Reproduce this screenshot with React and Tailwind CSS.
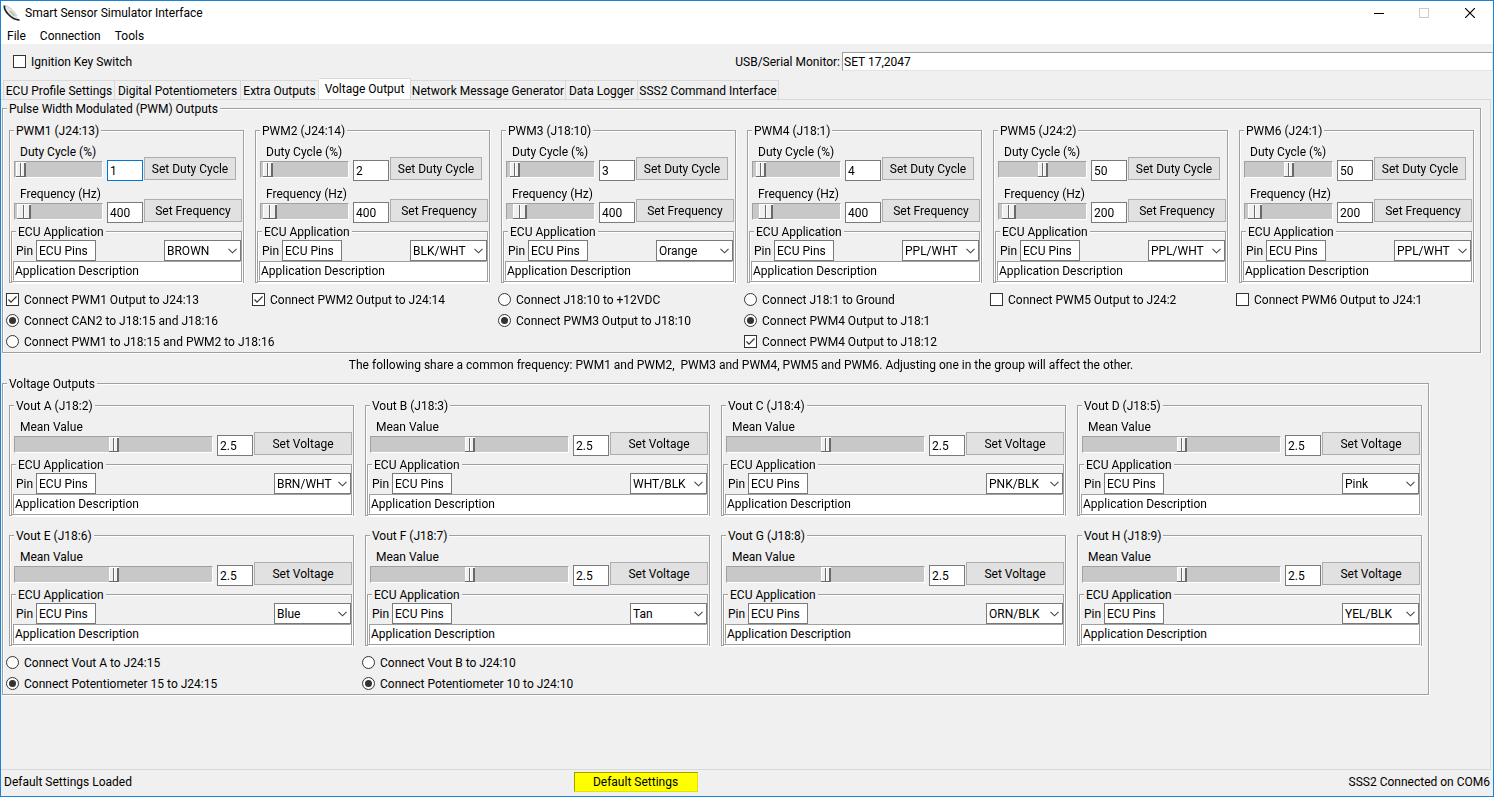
import React from "react";

const pwmOutputs = [
  {
    title: "PWM1 (J24:13)",
    duty: "1",
    dutyPos: 0,
    freq: "400",
    freqPos: 2,
    color: "BROWN",
    focused: true,
    options: [
      { type: "checkbox", label: "Connect PWM1 Output to J24:13", checked: true },
      { type: "radio", label: "Connect CAN2 to J18:15 and J18:16", checked: true },
      { type: "radio", label: "Connect PWM1 to J18:15 and PWM2 to J18:16" },
    ],
  },
  {
    title: "PWM2 (J24:14)",
    duty: "2",
    dutyPos: 1,
    freq: "400",
    freqPos: 2,
    color: "BLK/WHT",
    options: [
      { type: "checkbox", label: "Connect PWM2 Output to J24:14", checked: true },
    ],
  },
  {
    title: "PWM3 (J18:10)",
    duty: "3",
    dutyPos: 2,
    freq: "400",
    freqPos: 7,
    color: "Orange",
    options: [
      { type: "radio", label: "Connect J18:10 to +12VDC" },
      { type: "radio", label: "Connect PWM3 Output to J18:10", checked: true },
    ],
  },
  {
    title: "PWM4 (J18:1)",
    duty: "4",
    dutyPos: 3,
    freq: "400",
    freqPos: 7,
    color: "PPL/WHT",
    options: [
      { type: "radio", label: "Connect J18:1 to Ground" },
      { type: "radio", label: "Connect PWM4 Output to J18:1", checked: true },
      { type: "checkbox", label: "Connect PWM4 Output to J18:12", checked: true },
    ],
  },
  {
    title: "PWM5 (J24:2)",
    duty: "50",
    dutyPos: 50,
    freq: "200",
    freqPos: 3,
    color: "PPL/WHT",
    options: [{ type: "checkbox", label: "Connect PWM5 Output to J24:2" }],
  },
  {
    title: "PWM6 (J24:1)",
    duty: "50",
    dutyPos: 50,
    freq: "200",
    freqPos: 3,
    color: "PPL/WHT",
    options: [{ type: "checkbox", label: "Connect PWM6 Output to J24:1" }],
  },
];

const voltageOutputs = [
  { title: "Vout A (J18:2)", color: "BRN/WHT" },
  { title: "Vout B (J18:3)", color: "WHT/BLK" },
  { title: "Vout C (J18:4)", color: "PNK/BLK" },
  { title: "Vout D (J18:5)", color: "Pink" },
  {
    title: "Vout E (J18:6)",
    color: "Blue",
    options: [
      { type: "radio", label: "Connect Vout A to J24:15" },
      { type: "radio", label: "Connect Potentiometer 15 to J24:15", checked: true },
    ],
  },
  {
    title: "Vout F (J18:7)",
    color: "Tan",
    options: [
      { type: "radio", label: "Connect Vout B to J24:10" },
      { type: "radio", label: "Connect Potentiometer 10 to J24:10", checked: true },
    ],
  },
  { title: "Vout G (J18:8)", color: "ORN/BLK" },
  { title: "Vout H (J18:9)", color: "YEL/BLK" },
];

const tabs = [
  { label: "ECU Profile Settings", width: "w-28" },
  { label: "Digital Potentiometers", width: "w-[126px]" },
  { label: "Extra Outputs", width: "w-[78px]" },
  { label: "Voltage Output", width: "w-[92px]", active: true },
  { label: "Network Message Generator", width: "w-[155px]" },
  { label: "Data Logger", width: "w-[72px]" },
  { label: "SSS2 Command Interface", width: "w-[141px]" },
];

function Group({ title, className = "", bodyClass = "pt-px", children }) {
  return (
    <fieldset
      className={`min-w-0 border border-[#a0a0a0] shadow-[1px_1px_0_#fff,inset_1px_1px_0_#fff] ${className}`}
    >
      <legend className="ml-1 bg-[#f0f0f0] px-0.5 pt-0.5 leading-[13px] whitespace-nowrap">
        {title}
      </legend>
      <div className={bodyClass}>{children}</div>
    </fieldset>
  );
}

function Option({ type, name, label, checked }) {
  return (
    <label className="flex h-[21px] items-center gap-[5px] whitespace-nowrap">
      <span className="grid">
        <input
          type={type}
          name={name}
          defaultChecked={checked}
          className={`peer col-start-1 row-start-1 size-[13px] appearance-none border border-[#333] bg-white ${
            type === "radio" ? "rounded-full" : ""
          }`}
        />
        {type === "radio" ? (
          <span className="col-start-1 row-start-1 hidden size-[7px] place-self-center rounded-full bg-[#333] peer-checked:block" />
        ) : (
          <svg
            viewBox="0 0 13 13"
            className="pointer-events-none col-start-1 row-start-1 hidden size-[13px] peer-checked:block"
          >
            <path d="M2.5 6.5 5 9.2 10.5 3.5" fill="none" stroke="#333" strokeWidth="1.2" />
          </svg>
        )}
      </span>
      {label}
    </label>
  );
}

function SliderRow({ label, pos, wideThumb, value, button, buttonWidth, focused }) {
  return (
    <div className="flex items-end pl-[3px]">
      <div className="min-w-0 flex-1 pb-[3px]">
        <div className="pl-1.5 whitespace-nowrap">{label}</div>
        <input
          type="range"
          aria-label={label}
          defaultValue={pos}
          className={`mt-px block h-[17px] w-full appearance-none border border-t-[#a0a0a0] border-r-white border-b-white border-l-[#a0a0a0] bg-[#c8c8c8] px-px [&::-webkit-slider-thumb]:h-[15px] [&::-webkit-slider-thumb]:appearance-none [&::-webkit-slider-thumb]:border-y [&::-webkit-slider-thumb]:border-t-white [&::-webkit-slider-thumb]:border-b-[#696969] ${
            wideThumb
              ? "[&::-webkit-slider-thumb]:w-3.5 [&::-webkit-slider-thumb]:bg-[linear-gradient(90deg,#fff_1px,#f0f0f0_1px_6px,#696969_6px_7px,#fff_7px_8px,#f0f0f0_8px_12px,#696969_12px)]"
              : "[&::-webkit-slider-thumb]:w-2.5 [&::-webkit-slider-thumb]:bg-[linear-gradient(90deg,#fff_1px,#f0f0f0_1px_4px,#696969_4px_5px,#fff_5px_6px,#f0f0f0_6px_8px,#696969_8px)]"
          }`}
        />
      </div>
      <input
        aria-label={`${label} value`}
        defaultValue={value}
        autoFocus={focused}
        className="ml-1 h-[21px] w-9 border border-[#7a7a7a] bg-white px-0.5 outline-none focus:border-[#0078d7]"
      />
      <div className="mb-px ml-px w-[98px]">
        <button
          type="button"
          className={`block h-[23px] border border-[#adadad] bg-[#e1e1e1] whitespace-nowrap ${buttonWidth}`}
        >
          {button}
        </button>
      </div>
    </div>
  );
}

function EcuApplication({ color }) {
  return (
    <Group title="ECU Application" className="mt-px">
      <div className="flex items-center pl-1">
        <label className="flex items-center">
          <span className="w-5">Pin</span>
          <input
            defaultValue="ECU Pins"
            className="h-[21px] w-[60px] border border-[#7a7a7a] bg-white px-0.5 outline-none"
          />
        </label>
        <span className="ml-auto grid">
          <select
            aria-label="Wire color"
            className="col-start-1 row-start-1 h-[21px] w-[77px] appearance-none border border-[#7a7a7a] bg-white px-0.5 outline-none"
          >
            <option>{color}</option>
          </select>
          <svg
            viewBox="0 0 9 6"
            className="pointer-events-none col-start-1 row-start-1 mr-1 h-1.5 w-[9px] self-center justify-self-end"
          >
            <path d="M0.5 0.8 4.5 4.8 8.5 0.8" fill="none" stroke="#444" strokeWidth="1.1" />
          </svg>
        </span>
      </div>
      <input
        aria-label="Application Description"
        defaultValue="Application Description"
        className="ml-px block h-5 w-[calc(100%-1px)] border border-t-[#a0a0a0] border-r-white border-b-white border-l-[#a0a0a0] bg-white px-px outline-none"
      />
    </Group>
  );
}

function PwmOutput({ output }) {
  return (
    <div className="min-w-0">
      <Group title={output.title} className="ml-[3px]" bodyClass="px-px pt-1.5">
        <div className="flex flex-col gap-[5px]">
          <SliderRow
            label="Duty Cycle (%)"
            pos={output.dutyPos}
            value={output.duty}
            button="Set Duty Cycle"
            buttonWidth="w-[92px]"
            focused={output.focused}
          />
          <SliderRow
            label="Frequency (Hz)"
            pos={output.freqPos}
            wideThumb
            value={output.freq}
            button="Set Frequency"
            buttonWidth="w-[98px]"
          />
        </div>
        <EcuApplication color={output.color} />
      </Group>
      <div className="mt-1.5">
        {output.options.map((option) => (
          <Option key={option.label} name={output.title} {...option} />
        ))}
      </div>
    </div>
  );
}

function VoltageOutput({ output }) {
  return (
    <div className="min-w-0">
      <Group title={output.title} className="ml-[3px]" bodyClass="px-px pt-1.5">
        <SliderRow
          label="Mean Value"
          pos={50}
          value="2.5"
          button="Set Voltage"
          buttonWidth="w-[98px]"
        />
        <EcuApplication color={output.color} />
      </Group>
      {output.options && (
        <div className="mt-1.5">
          {output.options.map((option) => (
            <Option key={option.label} name={output.title} {...option} />
          ))}
        </div>
      )}
    </div>
  );
}

function TitleBar() {
  return (
    <header className="bg-white">
      <div className="flex h-6 items-center">
        <svg viewBox="0 0 18 18" className="ml-0.5 size-[18px]">
          <path d="M2 2C6 2 12 8 15.5 15C10 15 3 9 2 2Z" fill="#e4e4e4" />
          <path d="M7 7 12 12" fill="none" stroke="#9cc797" strokeWidth="1.5" />
          <path d="M2 1.5C5 1.5 11 6.5 14 12" fill="none" stroke="#bbb" strokeWidth="0.8" />
          <path d="M1.5 1.5C0.5 6 7.5 15.5 16.5 16.2" fill="none" stroke="#222" strokeWidth="1.7" />
        </svg>
        <h1 className="ml-1 grow">Smart Sensor Simulator Interface</h1>
        <button type="button" aria-label="Minimize" className="grid h-6 w-[45px] place-items-center">
          <svg viewBox="0 0 10 10" className="size-2.5">
            <path d="M0 5.5H10" stroke="#000" />
          </svg>
        </button>
        <button type="button" aria-label="Maximize" className="grid h-6 w-[45px] place-items-center">
          <svg viewBox="0 0 10 10" className="size-2.5">
            <rect x="0.5" y="0.5" width="9" height="9" fill="none" stroke="#ccc" />
          </svg>
        </button>
        <button type="button" aria-label="Close" className="grid h-6 w-[47px] place-items-center">
          <svg viewBox="0 0 10 10" className="size-2.5">
            <path d="M0 0 10 10M10 0 0 10" stroke="#000" strokeWidth="1.2" />
          </svg>
        </button>
      </div>
      <nav className="flex h-[19px] items-end gap-3.5 px-1.5">
        <button type="button">File</button>
        <button type="button">Connection</button>
        <button type="button">Tools</button>
      </nav>
    </header>
  );
}

function App() {
  return (
    <div className="flex min-h-screen flex-col border border-[#1883d7] bg-[#f0f0f0] font-[Roboto,'Open_Sans',sans-serif] text-[12px] leading-4 text-black">
      <TitleBar />
      <div className="flex h-[34px] items-center justify-between pt-px pl-3">
        <Option type="checkbox" label="Ignition Key Switch" />
        <label className="flex items-center gap-0.5 whitespace-nowrap">
          USB/Serial Monitor:
          <input
            defaultValue="SET 17,2047"
            className="h-[19px] w-[651px] shrink-0 border border-t-[#a0a0a0] border-r-[#e3e3e3] border-b-[#e3e3e3] border-l-[#a0a0a0] bg-white px-px outline-none"
          />
        </label>
      </div>
      <div role="tablist" className="flex h-[21px] items-end pl-0.5">
        {tabs.map((tab) => (
          <button
            key={tab.label}
            type="button"
            role="tab"
            aria-selected={Boolean(tab.active)}
            className={`border-t border-r border-[#d9d9d9] whitespace-nowrap first:border-l ${tab.width} ${
              tab.active ? "h-[21px] bg-white" : "h-[19px] pt-0.5"
            }`}
          >
            {tab.label}
          </button>
        ))}
      </div>
      <main className="mr-0.5 grow border-t border-r border-b border-[#d9d9d9] pt-px">
        <Group
          title="Pulse Width Modulated (PWM) Outputs"
          className="mr-[9px] ml-px"
          bodyClass="pt-[7px] pr-1.5 pl-[3px]"
        >
          <div className="grid grid-cols-6 gap-2">
            {pwmOutputs.map((output) => (
              <PwmOutput key={output.title} output={output} />
            ))}
          </div>
        </Group>
        <p className="mt-1 mr-[9px] text-center whitespace-pre">
          The following share a common frequency: PWM1 and PWM2,  PWM3 and PWM4, PWM5 and PWM6. Adjusting one in the group will affect the other.
        </p>
        <Group
          title="Voltage Outputs"
          className="mt-[3px] mr-[61px] ml-px"
          bodyClass="pt-[7px] pr-1.5 pl-[3px]"
        >
          <div className="grid grid-cols-4 gap-x-2 gap-y-3">
            {voltageOutputs.map((output) => (
              <VoltageOutput key={output.title} output={output} />
            ))}
          </div>
        </Group>
      </main>
      <footer className="grid h-[26px] grid-cols-[37fr_11fr_52fr] items-center px-[3px] pb-0.5">
        <span>Default Settings Loaded</span>
        <button
          type="button"
          className="h-5 w-[124px] justify-self-center border border-t-[#a0a000] border-r-[#e3e300] border-b-[#e3e300] border-l-[#a0a000] bg-[#ffff00]"
        >
          Default Settings
        </button>
        <span className="justify-self-end">SSS2 Connected on COM6</span>
      </footer>
    </div>
  );
}

export default App;
